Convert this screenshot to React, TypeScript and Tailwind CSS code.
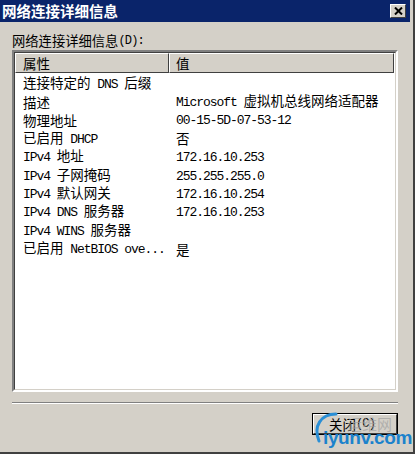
import React from "react";

const CJK = "font-['Noto_Sans_CJK_SC','Noto_Sans',sans-serif]";

function Mixed({ t }: { t: string }) {
  const parts = t.split(/([\x20-\x7e]+)/).filter((p) => p.length > 0);
  return (
    <>
      {parts.map((p, i) =>
        /^[\x20-\x7e]+$/.test(p) ? (
          <span key={i} className="font-['Liberation_Mono',monospace] text-[13px] tracking-[-1.05px] whitespace-pre">
            {p}
          </span>
        ) : (
          <span key={i} className="whitespace-pre">{p}</span>
        )
      )}
    </>
  );
}

const rows: [string, string][] = [
  ["连接特定的 DNS 后缀", ""],
  ["描述", "Microsoft 虚拟机总线网络适配器"],
  ["物理地址", "00-15-5D-07-53-12"],
  ["已启用 DHCP", "否"],
  ["IPv4 地址", "172.16.10.253"],
  ["IPv4 子网掩码", "255.255.255.0"],
  ["IPv4 默认网关", "172.16.10.254"],
  ["IPv4 DNS 服务器", "172.16.10.253"],
  ["IPv4 WINS 服务器", ""],
  ["已启用 NetBIOS ove...", "是"],
];

export default function App() {
  return (
    <div className={`w-[417px] h-[457px] bg-white overflow-hidden ${CJK}`}>
      <div className="w-[415px] h-[454px] bg-[#d4d0c8] border-r-2 border-b-2 border-r-[#404040] border-b-[#404040] flex flex-col">
        {/* Title bar */}
        <div className="h-[22px] mr-[3px] bg-[#0a246a] flex items-center justify-between pl-[2px] pr-[4px]">
          <span className="text-white font-bold text-[14.5px] leading-[22px]">网络连接详细信息</span>
          <div className="w-[16px] h-[14px] bg-[#d4d0c8] border border-t-white border-l-white border-r-[#404040] border-b-[#404040] flex items-center justify-center">
            <svg width="9" height="8" viewBox="0 0 9 8">
              <path d="M1 0.5 L8 7.5 M8 0.5 L1 7.5" stroke="#000" strokeWidth="2" />
            </svg>
          </div>
        </div>

        {/* Body */}
        <div className="flex flex-col pl-[12px] pr-[15px]">
          <div className="h-[28px] flex items-end text-[13.3px] text-black leading-[18px]">
            <span>网络连接详细信息</span>
            <span className="font-['Liberation_Mono',monospace] text-[12px] tracking-[-0.8px]">(D):</span>
          </div>

          {/* List box */}
          <div className="h-[342px] border-2 border-t-[#808080] border-l-[#808080] border-r-white border-b-white">
            <div className="h-full bg-white border border-t-[#404040] border-l-[#404040] border-r-[#d4d0c8] border-b-[#d4d0c8] flex flex-col text-[13.5px] text-black">
              {/* Header */}
              <div className="h-[20px] flex shrink-0 mr-[1px]">
                <div className="w-[154px] bg-[#d4d0c8] border border-t-white border-l-white border-r-[#404040] border-b-[#404040] flex items-center pl-[7px] leading-[18px]">
                  属性
                </div>
                <div className="flex-1 bg-[#d4d0c8] border border-t-white border-l-white border-r-[#404040] border-b-[#404040] flex items-center pl-[6px] leading-[18px]">
                  值
                </div>
              </div>
              <div className="h-[1px]" />
              {rows.map(([k, v], i) => (
                <div key={i} className="h-[18.4px] flex items-center leading-[18px]">
                  <div className="w-[154px] pl-[8px] whitespace-nowrap">
                    <Mixed t={k} />
                  </div>
                  <div className="flex-1 pl-[7px] whitespace-nowrap">
                    <Mixed t={v} />
                  </div>
                </div>
              ))}
            </div>
          </div>

          {/* Separator */}
          <div className="mt-[10px] h-[2px] border-t border-t-[#808080] border-b border-b-white" />

          {/* Button row */}
          <div className="mt-[9px] flex justify-end">
            <div className="relative w-[86px] h-[22px] border border-black">
              <div className="w-full h-full border border-t-white border-l-white border-r-[#404040] border-b-[#404040] flex items-center justify-center text-[13.5px] leading-[18px] text-black">
                <span className="-ml-[6px]">关闭</span>
                <span className="font-['Liberation_Mono',monospace] text-[12px] tracking-[-0.8px]">(C)</span>
              </div>
              {/* watermark overlay */}
              <span className="absolute left-[34px] top-[1px] text-[15px] leading-[18px] text-[#a0a0a0]/70 pointer-events-none">
                运维网
              </span>
              <svg className="absolute -left-[2px] -top-[3px] pointer-events-none" width="30" height="38" viewBox="0 0 30 38">
                <path d="M25 3 C 10 3, 2 15, 8 30" stroke="#2a8fd6" strokeWidth="3" fill="none" strokeLinecap="round" />
              </svg>
              <span className="absolute left-[10px] top-[14px] text-[19px] leading-[20px] font-bold text-[#1b82cc] font-['Liberation_Sans',sans-serif] tracking-[-0.4px] pointer-events-none">
                iyunv.com
              </span>
            </div>
          </div>
        </div>
      </div>
    </div>
  );
}
